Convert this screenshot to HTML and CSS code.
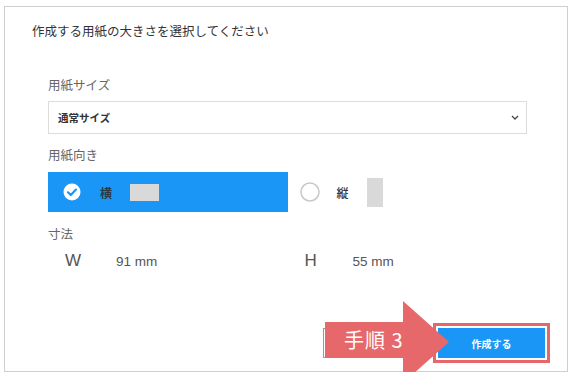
FILE: index.html
```html
<!DOCTYPE html>
<html lang="ja">
<head>
  <meta charset="UTF-8" />
  <title>用紙の選択</title>
  <meta name="viewport" content="width=device-width, initial-scale=1.0" />
  <link rel="stylesheet" href="styles.css">
</head>
<body>

  <div class="dialog">
    <h1 class="dialog-title">作成する用紙の大きさを選択してください</h1>

    <div class="dialog-body">
      <label class="field-label">用紙サイズ</label>
      <div class="select">
        <span>通常サイズ</span>
        <svg class="chevron" width="8" height="5" viewBox="0 0 8 5">
          <path d="M1 1 L4 4 L7 1" fill="none" stroke="#444" stroke-width="1.3" />
        </svg>
      </div>

      <label class="field-label">用紙向き</label>
      <div class="orientation">
        <div class="option selected">
          <svg class="radio" width="18" height="18" viewBox="0 0 18 18">
            <circle cx="9" cy="9" r="8.5" fill="#fff" />
            <path d="M5 9.3 L7.8 12 L13 6.6" fill="none" stroke="#1a96f6" stroke-width="2.2" stroke-linecap="round" stroke-linejoin="round" />
          </svg>
          <span class="option-name">横</span>
          <span class="paper landscape"></span>
        </div>
        <div class="option">
          <svg class="radio" width="20" height="20" viewBox="0 0 20 20">
            <circle cx="10" cy="10" r="9" fill="#fff" stroke="#c8c8c8" stroke-width="1.5" />
          </svg>
          <span class="option-name">縦</span>
          <span class="paper portrait"></span>
        </div>
      </div>

      <label class="field-label">寸法</label>
      <div class="dims">
        <div class="dim">
          <span class="dim-key">W</span>
          <span class="dim-val">91 mm</span>
        </div>
        <div class="dim">
          <span class="dim-key">H</span>
          <span class="dim-val">55 mm</span>
        </div>
      </div>
    </div>

    <div class="dialog-footer">
      <button class="btn-cancel" aria-label="キャンセル"></button>
      <button class="btn-create">作成する</button>
    </div>

    <div class="step-arrow">
      <span>手順 3</span>
    </div>
  </div>

</body>
</html>
```

FILE: styles.css
```css
body {
  font-family: "Noto Sans CJK JP", "Liberation Sans", sans-serif;
  margin: 0;
  padding: 0;
  background: #fff;
}
.dialog {
  position: relative;
  margin: 6px 0 0 4px;
  width: 562px;
  height: 364px;
  border: 1px solid #cfcfcf;
}
.dialog-title {
  margin: 0;
  padding: 15px 0 0 27px;
  font-size: 12.5px;
  line-height: 18px;
  font-weight: normal;
  color: #333;
}
.dialog-body {
  padding: 36px 40px 0 43px;
}
.field-label {
  display: block;
  font-size: 12.5px;
  line-height: 18px;
  color: #666;
}
.select {
  display: flex;
  align-items: center;
  justify-content: space-between;
  margin-top: 7px;
  height: 31px;
  padding: 0 7px 0 9px;
  border: 1px solid #dcdcdc;
  font-size: 10.5px;
  font-weight: bold;
  color: #333;
}
.select + .field-label {
  margin-top: 12px;
}
.orientation {
  display: flex;
  margin-top: 8px;
  height: 40px;
}
.option {
  display: flex;
  align-items: center;
  width: 240px;
  box-sizing: border-box;
}
.option.selected {
  background: #1a96f6;
  padding-left: 15px;
}
.option.selected .radio {
  margin-right: 19px;
}
.option:not(.selected) {
  padding-left: 12px;
}
.option:not(.selected) .radio {
  margin-right: 17px;
}
.option-name {
  font-size: 12px;
  font-weight: 500;
  color: #333;
}
.option.selected .option-name {
  font-weight: bold;
  color: #2a3a4a;
}
.paper {
  display: inline-block;
  background: #d9d9d9;
  margin-left: 18px;
}
.paper.landscape {
  width: 29px;
  height: 17px;
}
.paper.portrait {
  width: 16px;
  height: 29px;
}
.orientation + .field-label {
  margin-top: 13px;
}
.dims {
  display: flex;
  margin-top: 8px;
}
.dim {
  display: flex;
  align-items: baseline;
  width: 240px;
  padding-left: 17px;
  font-family: "Liberation Sans", Arial, sans-serif;
}
.dim-key {
  width: 51px;
  font-size: 17px;
  color: #555;
}
.dim:last-child .dim-key {
  width: 48px;
}
.dim-val {
  font-size: 13.5px;
  color: #555;
}
.dialog-footer {
  position: absolute;
  right: 22px;
  bottom: 13px;
  display: flex;
  gap: 8px;
}
.dialog-footer button {
  height: 30px;
  width: 107px;
  font-family: "Noto Sans CJK JP", sans-serif;
  font-size: 10px;
  font-weight: bold;
  border-radius: 0;
}
.btn-cancel {
  background: #fff;
  border: 1px solid #999;
}
.btn-create {
  background: #1a96f6;
  color: #fff;
  border: none;
  outline: 3px solid #e5676a;
  outline-offset: 2px;
}
.step-arrow {
  position: absolute;
  left: 320px;
  top: 294px;
  width: 124px;
  height: 82px;
  clip-path: polygon(0 21px, 78px 21px, 78px 0, 124px 41px, 78px 82px, 78px 57px, 0 57px);
  background: #e7686a;
}
.step-arrow span {
  position: absolute;
  left: 19px;
  top: 23px;
  font-size: 20px;
  line-height: 32px;
  color: #fff;
  letter-spacing: 1px;
}
```
